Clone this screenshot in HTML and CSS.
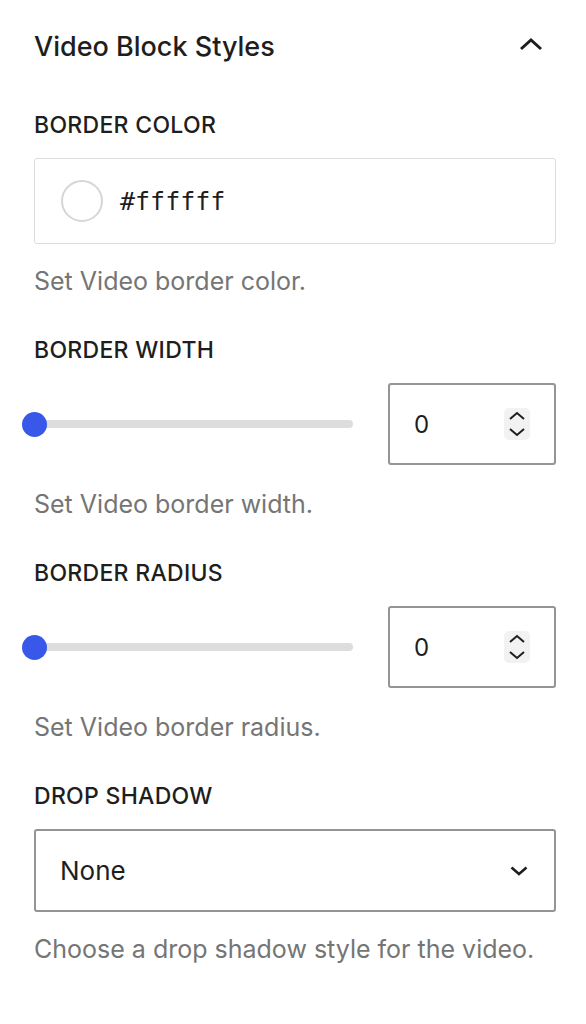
FILE: index.html
```html
<!DOCTYPE html>
<html lang="en">
<head>
    <meta charset="UTF-8">
    <meta name="viewport" content="width=device-width, initial-scale=1.0">
    <title>Video Block Styles</title>
    <link rel="stylesheet" href="styles.css">
</head>
<body>
    <div class="panel">
        <!-- パネルヘッダー -->
        <div class="panel-header">
            <h2 class="panel-title">Video Block Styles</h2>
            <svg class="panel-toggle" width="26" height="16" viewBox="0 0 26 16" aria-hidden="true">
                <path d="M3 13 L13 4 L23 13" fill="none" stroke="#1e1e1e" stroke-width="3"/>
            </svg>
        </div>

        <!-- ボーダーカラー -->
        <div class="field">
            <div class="field-label">Border Color</div>
            <div class="color-box">
                <span class="swatch"></span>
                <span class="color-value">#ffffff</span>
            </div>
            <p class="field-help">Set Video border color.</p>
        </div>

        <!-- ボーダー幅 -->
        <div class="field">
            <div class="field-label">Border Width</div>
            <div class="range-row">
                <div class="range">
                    <span class="range-thumb"></span>
                    <span class="range-track"></span>
                </div>
                <div class="number-box">
                    <span class="number-value">0</span>
                    <span class="spin">
                        <svg width="18" height="28" viewBox="0 0 18 28" aria-hidden="true">
                            <path d="M2 9 L9 3 L16 9" fill="none" stroke="#1e1e1e" stroke-width="2"/>
                            <path d="M2 19 L9 25 L16 19" fill="none" stroke="#1e1e1e" stroke-width="2"/>
                        </svg>
                    </span>
                </div>
            </div>
            <p class="field-help">Set Video border width.</p>
        </div>

        <!-- ボーダー角丸 -->
        <div class="field">
            <div class="field-label">Border Radius</div>
            <div class="range-row">
                <div class="range">
                    <span class="range-thumb"></span>
                    <span class="range-track"></span>
                </div>
                <div class="number-box">
                    <span class="number-value">0</span>
                    <span class="spin">
                        <svg width="18" height="28" viewBox="0 0 18 28" aria-hidden="true">
                            <path d="M2 9 L9 3 L16 9" fill="none" stroke="#1e1e1e" stroke-width="2"/>
                            <path d="M2 19 L9 25 L16 19" fill="none" stroke="#1e1e1e" stroke-width="2"/>
                        </svg>
                    </span>
                </div>
            </div>
            <p class="field-help">Set Video border radius.</p>
        </div>

        <!-- ドロップシャドウ -->
        <div class="field">
            <div class="field-label">Drop Shadow</div>
            <div class="select-box">
                <span class="select-value">None</span>
                <svg width="18" height="10" viewBox="0 0 18 10" aria-hidden="true">
                    <path d="M1.5 1.5 L9 8 L16.5 1.5" fill="none" stroke="#1e1e1e" stroke-width="2.5"/>
                </svg>
            </div>
            <p class="field-help">Choose a drop shadow style for the video.</p>
        </div>
    </div>
</body>
</html>
```

FILE: styles.css
```css
body {
    margin: 0;
    font-family: Inter, "Noto Sans", sans-serif;
    color: #1e1e1e;
    background-color: #fff;
}

.panel {
    padding: 30px 30px 0 34px;
}

/* ヘッダー */
.panel-header {
    display: flex;
    justify-content: space-between;
    align-items: center;
    margin-bottom: 49px;
}

.panel-title {
    margin: 0;
    font-size: 27px;
    font-weight: 500;
    line-height: 34px;
}

.panel-toggle {
    margin-right: 12px;
    margin-bottom: 6px;
}

/* 各項目 */
.field-label {
    font-size: 23px;
    font-weight: 500;
    line-height: 24px;
    letter-spacing: 0.3px;
    text-transform: uppercase;
    margin-bottom: 21px;
}

.field-help {
    margin: 22px 0 42px;
    font-size: 25px;
    line-height: 30px;
    color: #757575;
}

/* スライダーの下は少し広め */
.range-row + .field-help {
    margin-top: 24px;
}

/* カラー */
.color-box {
    display: flex;
    align-items: center;
    gap: 17px;
    height: 86px;
    box-sizing: border-box;
    padding-left: 26px;
    border: 1px solid #dcdcdc;
    border-radius: 3px;
}

.swatch {
    width: 42px;
    height: 42px;
    box-sizing: border-box;
    border: 2px solid #d6d6d6;
    border-radius: 50%;
    background-color: #fff;
}

.color-value {
    font-family: "DejaVu Sans Mono", "Liberation Mono", monospace;
    font-size: 25px;
}

/* スライダー */
.range-row {
    display: flex;
    justify-content: space-between;
    align-items: center;
}

.range {
    display: flex;
    align-items: center;
    width: 331px;
    margin-left: -12px;
}

.range-thumb {
    position: relative;
    z-index: 1;
    flex: 0 0 25px;
    height: 25px;
    border-radius: 50%;
    background-color: #3858e9;
}

.range-track {
    flex: 1;
    height: 8px;
    margin-left: -12px;
    border-radius: 4px;
    background-color: #dddddd;
}

.number-box {
    display: flex;
    align-items: center;
    justify-content: space-between;
    width: 168px;
    height: 82px;
    box-sizing: border-box;
    padding: 0 24px 0 24px;
    border: 2px solid #949494;
    border-radius: 3px;
}

.number-value {
    font-size: 24px;
}

.spin {
    display: flex;
    align-items: center;
    justify-content: center;
    width: 26px;
    height: 32px;
    border-radius: 5px;
    background-color: #f2f2f2;
}

/* セレクト */
.select-box {
    display: flex;
    align-items: center;
    justify-content: space-between;
    height: 83px;
    box-sizing: border-box;
    padding: 0 26px 0 24px;
    border: 2px solid #949494;
    border-radius: 3px;
}

.select-value {
    font-size: 26px;
}
```
